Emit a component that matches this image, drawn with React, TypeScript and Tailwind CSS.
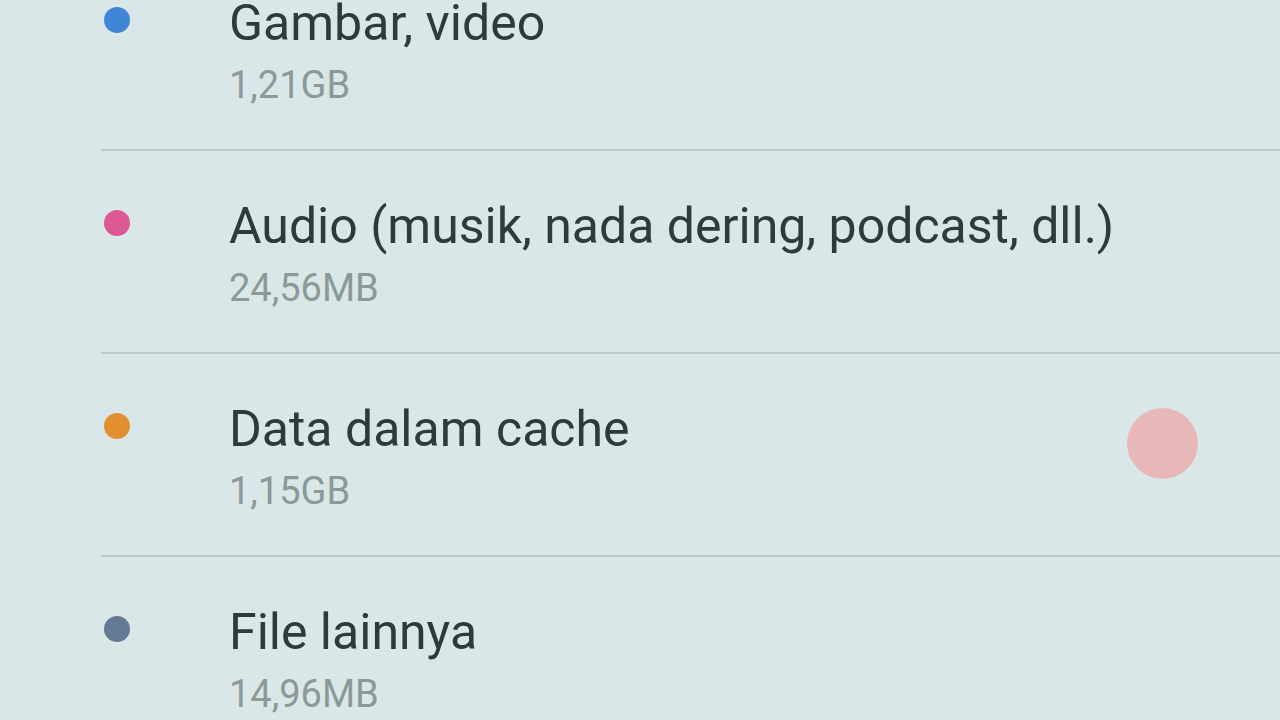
const items = [
  { dot: "bg-[#3f86d8]", title: "Gambar, video", size: "1,21GB" },
  { dot: "bg-[#db5895]", title: "Audio (musik, nada dering, podcast, dll.)", size: "24,56MB" },
  { dot: "bg-[#e38f2f]", title: "Data dalam cache", size: "1,15GB" },
  { dot: "bg-[#627a93]", title: "File lainnya", size: "14,96MB" },
];

export default function App() {
  return (
    <div className="relative w-[1280px] h-[720px] overflow-hidden bg-[#dae7e8] font-['Roboto',sans-serif]">
      <div className="flex flex-col -mt-[52px]">
        {items.map((it, i) => (
          <div
            key={it.title}
            className={`ml-[101px] h-[203px] pt-[47px] ${i < items.length - 1 ? "border-b-2 border-[#bccaca]" : ""}`}
          >
            <div className="flex items-center h-[56px]">
              <span className={`ml-[3px] -mt-[6px] w-[26px] h-[26px] rounded-full ${it.dot}`} />
              <span className="ml-[99px] text-[50px] leading-[56px] text-[#2e3b3b]">{it.title}</span>
            </div>
            <div className="mt-3 ml-[128px] text-[38px] leading-[44px] text-[#8b9998]">{it.size}</div>
          </div>
        ))}
      </div>
      {/* touch indicator */}
      <div className="absolute left-[1127px] top-[408px] w-[71px] h-[71px] rounded-full bg-[#e8b7b8]" />
    </div>
  );
}
